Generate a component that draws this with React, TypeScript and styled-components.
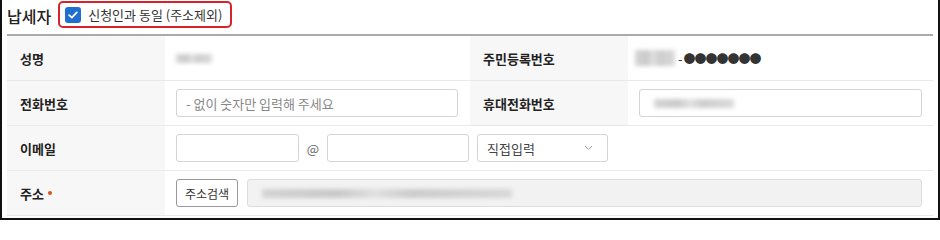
import React from "react";
import styled, { createGlobalStyle } from "styled-components";

const GlobalStyle = createGlobalStyle`
  html, body {
    margin: 0;
    padding: 0;
    background: #fff;
  }
  body {
    font-family: "Noto Sans CJK KR", "Noto Sans", sans-serif;
    color: #222;
  }
`;

const App: React.FC = () => {
  return (
    <Frame>
      <GlobalStyle />
      <Header>
        <Title>납세자</Title>
        <SameBox>
          <CheckMark>
            <svg width="10" height="8" viewBox="0 0 10 8">
              <path
                d="M1.2 4.2 L3.8 6.6 L8.8 1.4"
                fill="none"
                stroke="#fff"
                strokeWidth="1.8"
                strokeLinecap="round"
                strokeLinejoin="round"
              />
            </svg>
          </CheckMark>
          <CheckLabel>신청인과 동일 (주소제외)</CheckLabel>
        </SameBox>
      </Header>

      <Table>
        <Label>성명</Label>
        <Value>
          <Blur $w={36} />
        </Value>
        <Label>주민등록번호</Label>
        <Value $pad={7}>
          <Blur $w={40} $tall />
          <Dash>-</Dash>
          <Dots>●●●●●●●</Dots>
        </Value>

        <Label>전화번호</Label>
        <Value>
          <Input $w={282} placeholder="- 없이 숫자만 입력해 주세요" />
        </Value>
        <Label>휴대전화번호</Label>
        <Value>
          <FakeInput $w={283}>
            <Blur $w={80} />
          </FakeInput>
        </Value>

        <Label>이메일</Label>
        <Value $span>
          <Input $w={123} />
          <At>@</At>
          <Input $w={142} />
          <Select>
            <span>직접입력</span>
            <svg width="9" height="6" viewBox="0 0 9 6">
              <path d="M1 1 L4.5 4.5 L8 1" fill="none" stroke="#999" strokeWidth="1" />
            </svg>
          </Select>
        </Value>

        <Label>
          주소<Required />
        </Label>
        <Value $span>
          <Button>주소검색</Button>
          <FakeInput $w={675} $disabled>
            <Blur $w={250} />
          </FakeInput>
        </Value>
      </Table>
    </Frame>
  );
};

export default App;

const Frame = styled.div`
  box-sizing: border-box;
  width: 940px;
  height: 220px;
  border: 2px solid #111;
  border-top: none;
  padding: 0 5px;
`;

const Header = styled.div`
  display: flex;
  align-items: center;
  gap: 7px;
  height: 34px;
`;

const Title = styled.h3`
  margin: -3px 0 0;
  font-size: 16px;
  font-weight: 500;
  color: #222;
`;

const SameBox = styled.label`
  box-sizing: border-box;
  display: flex;
  align-items: center;
  gap: 7px;
  height: 27px;
  padding: 0 8px 0 5px;
  border: 2px solid #d8232a;
  border-radius: 5px;
  margin-top: -5px;
`;

const CheckMark = styled.span`
  display: flex;
  align-items: center;
  justify-content: center;
  width: 16px;
  height: 16px;
  border-radius: 3px;
  background: #1f6fd0;
`;

const CheckLabel = styled.span`
  font-size: 13px;
  color: #333;
`;

const Table = styled.div`
  display: grid;
  grid-template-columns: 158px 305px 158px 1fr;
  border-top: 2px solid #aaa;
  width: 926px;
`;

const Label = styled.div`
  display: flex;
  align-items: center;
  height: 44px;
  padding-left: 13px;
  background: #f7f7f7;
  border-bottom: 1px solid #e9e9e9;
  font-size: 13px;
  font-weight: 700;
  color: #222;
`;

const Value = styled.div<{ $span?: boolean; $pad?: number }>`
  display: flex;
  align-items: center;
  height: 44px;
  padding-left: ${(p) => p.$pad ?? 11}px;
  border-bottom: 1px solid #e9e9e9;
  grid-column: ${(p) => (p.$span ? "span 3" : "auto")};
`;

const Blur = styled.span<{ $w: number; $tall?: boolean }>`
  display: inline-block;
  width: ${(p) => p.$w}px;
  height: ${(p) => (p.$tall ? 16 : 9)}px;
  background: linear-gradient(
    90deg,
    #d0d0d0 0%,
    #c4c4c4 30%,
    #dedede 45%,
    #c8c8c8 60%,
    #d6d6d6 100%
  );
  filter: blur(2px);
  opacity: 0.9;
`;

const Dash = styled.span`
  font-size: 13px;
  color: #333;
  margin: 0 1px 0 3px;
`;

const Dots = styled.span`
  font-size: 12px;
  letter-spacing: -1px;
  color: #333;
`;

const Input = styled.input<{ $w: number }>`
  box-sizing: border-box;
  width: ${(p) => p.$w}px;
  height: 28px;
  padding: 0 9px;
  border: 1px solid #d4d4d4;
  border-radius: 3px;
  font-family: inherit;
  font-size: 13px;
  color: #333;
  &::placeholder {
    color: #888;
  }
`;

const FakeInput = styled.div<{ $w: number; $disabled?: boolean }>`
  box-sizing: border-box;
  display: flex;
  align-items: center;
  width: ${(p) => p.$w}px;
  height: 28px;
  padding: 0 14px;
  border: 1px solid ${(p) => (p.$disabled ? "#dcdcdc" : "#d4d4d4")};
  border-radius: 3px;
  background: ${(p) => (p.$disabled ? "#f2f2f2" : "#fff")};
`;

const At = styled.span`
  width: 28px;
  text-align: center;
  font-size: 13px;
  color: #666;
`;

const Select = styled.div`
  box-sizing: border-box;
  display: flex;
  align-items: center;
  justify-content: space-between;
  width: 131px;
  height: 28px;
  margin-left: 8px;
  padding: 0 14px 0 9px;
  border: 1px solid #d4d4d4;
  border-radius: 3px;
  font-size: 13px;
  color: #444;
`;

const Button = styled.button`
  box-sizing: border-box;
  height: 28px;
  width: 62px;
  margin-right: 9px;
  padding: 0;
  border: 1px solid #999;
  border-radius: 3px;
  background: #fff;
  font-family: inherit;
  font-size: 12px;
  color: #333;
`;

const Required = styled.span`
  display: inline-block;
  width: 4px;
  height: 4px;
  border-radius: 50%;
  background: #d9531e;
  margin-left: 4px;
`;
